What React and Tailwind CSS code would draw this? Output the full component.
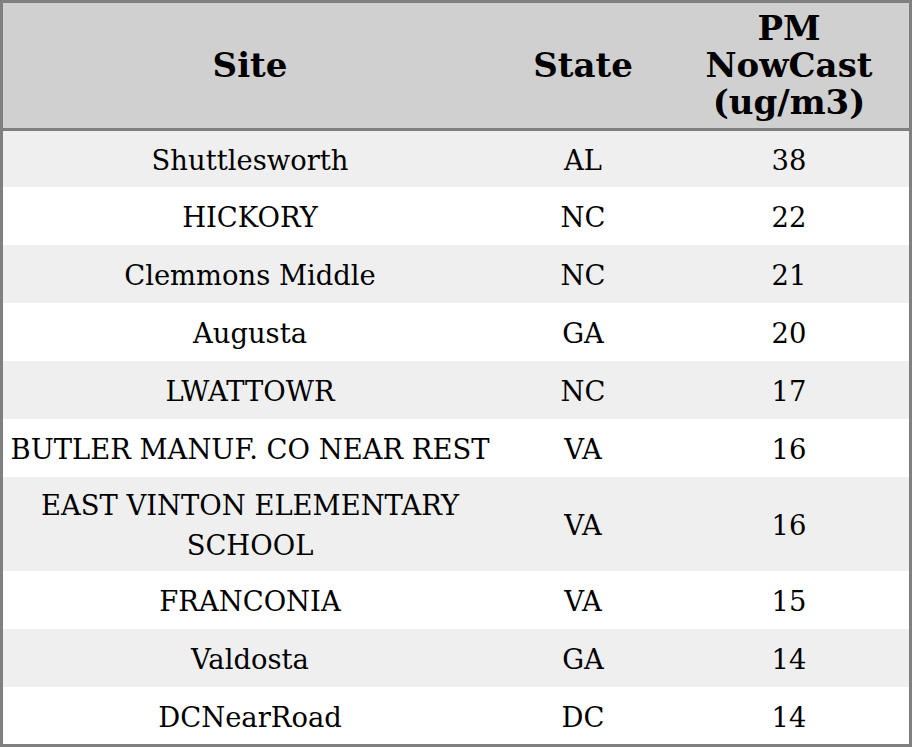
import React from "react";

const rows = [
  ["Shuttlesworth", "AL", "38"],
  ["HICKORY", "NC", "22"],
  ["Clemmons Middle", "NC", "21"],
  ["Augusta", "GA", "20"],
  ["LWATTOWR", "NC", "17"],
  ["BUTLER MANUF. CO NEAR REST", "VA", "16"],
  ["EAST VINTON ELEMENTARY SCHOOL", "VA", "16"],
  ["FRANCONIA", "VA", "15"],
  ["Valdosta", "GA", "14"],
  ["DCNearRoad", "DC", "14"],
];

export default function App() {
  return (
    <div
      className="w-[912px] h-[747px] box-border border-[3px] border-[#808080] bg-white text-black flex flex-col overflow-hidden"
      style={{ fontFamily: '"DejaVu Serif", serif' }}
    >
      <div className="grid grid-cols-[494px_172px_240px] h-[128px] shrink-0 bg-[#d0d0d0] border-b-[3px] border-[#808080] text-[34px] leading-[37px] font-bold">
        <div className="flex items-center justify-center text-center px-[6px]">Site</div>
        <div className="flex items-center justify-center text-center px-[6px]">State</div>
        <div className="flex items-center justify-center text-center px-[10px]">PM NowCast (ug/m3)</div>
      </div>
      {rows.map((r, i) => (
        <div
          key={i}
          className={
            "grid grid-cols-[494px_172px_240px] shrink-0 text-[27.4px] leading-[40px] " +
            (i % 2 === 0 ? "bg-[#efefef] " : "bg-white ") +
            (i === 0 ? "min-h-[56px]" : "min-h-[58px]")
          }
        >
          <div className="flex items-center justify-center text-center px-[5px] pt-[9px] pb-[5px]">{r[0]}</div>
          <div className="flex items-center justify-center text-center px-[5px] pt-[9px] pb-[5px]">{r[1]}</div>
          <div className="flex items-center justify-center text-center px-[5px] pt-[9px] pb-[5px]">{r[2]}</div>
        </div>
      ))}
    </div>
  );
}
